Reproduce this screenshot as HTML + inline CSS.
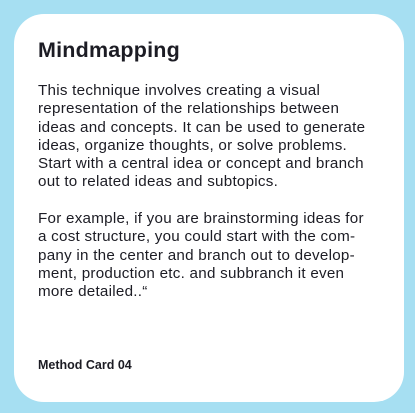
<!DOCTYPE html>
<html><head><meta charset="utf-8"><style>
html,body{margin:0;padding:0}
body{width:415px;height:413px;background:#a6dff2;position:relative;overflow:hidden;font-family:"Liberation Sans",sans-serif;color:#1c1c24}
.card{position:absolute;left:14px;top:14px;width:390px;height:388px;background:#fff;border-radius:30px}
h1{position:absolute;left:38px;top:37px;margin:0;font-size:21.5px;font-weight:bold;line-height:26px;letter-spacing:0.2px}
.p{position:absolute;left:38px;top:82px;font-size:15.2px;letter-spacing:0.25px;line-height:18.3px;white-space:nowrap;margin:0}
.f{position:absolute;left:38px;top:358px;font-size:12.5px;font-weight:bold}
</style></head><body>
<div class="card"></div>
<h1>Mindmapping</h1>
<div class="p">This technique involves creating a visual<br>representation of the relationships between<br>ideas and concepts. It can be used to generate<br>ideas, organize thoughts, or solve problems.<br>Start with a central idea or concept and branch<br>out to related ideas and subtopics.<br><br>For example, if you are brainstorming ideas for<br>a cost structure, you could start with the com-<br>pany in the center and branch out to develop-<br>ment, production etc. and subbranch it even<br>more detailed..“</div>
<div class="f">Method Card 04</div>
</body></html>
